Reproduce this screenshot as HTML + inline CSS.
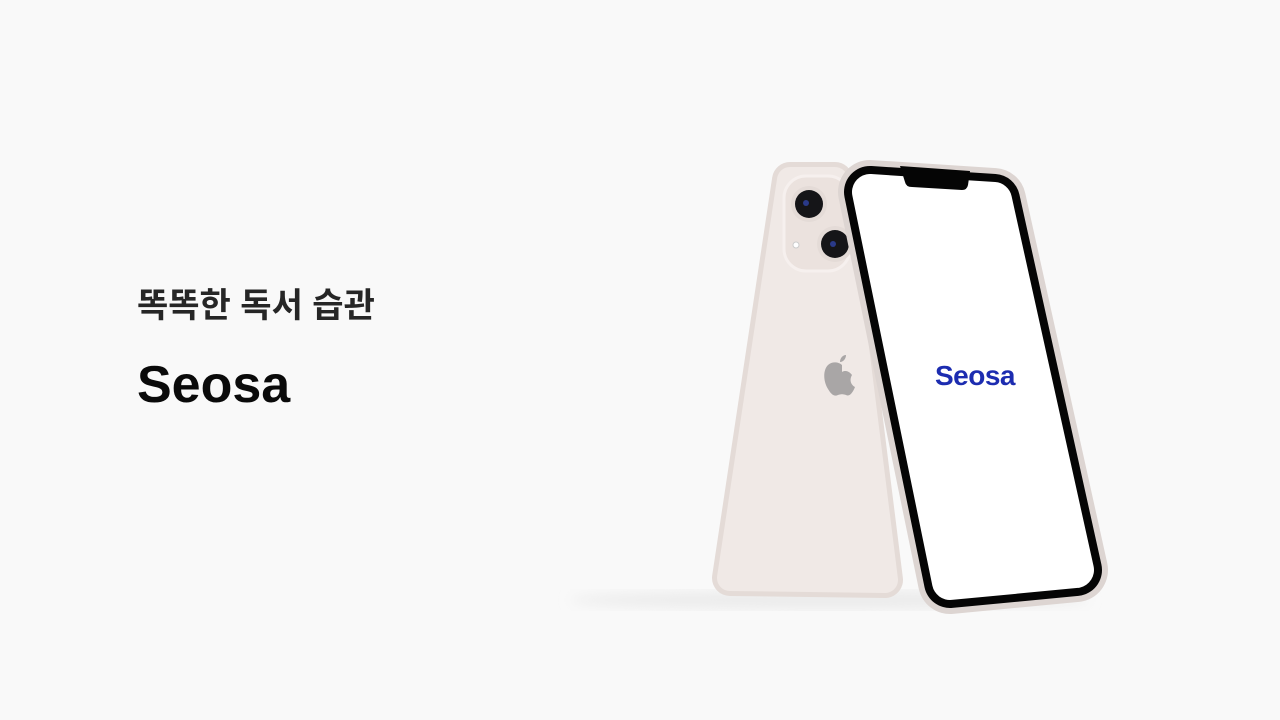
<!DOCTYPE html>
<html><head><meta charset="utf-8"><style>
html,body{margin:0;padding:0;width:1280px;height:720px;background:#f9f9f9;overflow:hidden}
.t1{position:absolute;left:137px;top:278px;font:700 34px "Liberation Sans","Noto Sans CJK KR",sans-serif;color:#262626;letter-spacing:0px}
.t2{position:absolute;left:137px;top:355px;font:700 52px "Liberation Sans",sans-serif;color:#0a0a0a;letter-spacing:0px}
svg{position:absolute;left:0;top:0}
</style></head><body>
<div class="t1">똑똑한 독서 습관</div>
<div class="t2">Seosa</div>
<svg width="1280" height="720">
<defs><filter id="b"><feGaussianBlur stdDeviation="6"/></filter></defs>
<ellipse cx="830" cy="600" rx="260" ry="9" fill="#ebebeb" filter="url(#b)"/>
<!-- back phone -->
<polygon points="790,180 835,180 885,580 730,578" fill="#eee6e3" stroke="#e4dbd7" stroke-width="36" stroke-linejoin="round"/>
<polygon points="790,180 835,180 885,580 730,578" fill="#f0e9e6" stroke="#f0e9e6" stroke-width="26" stroke-linejoin="round"/>
<rect x="784" y="176" width="66" height="95" rx="22" fill="#ebe2de" stroke="#f6f0ee" stroke-width="3"/>
<circle cx="809" cy="204" r="18" fill="#e4dbd7"/>
<circle cx="809" cy="204" r="14" fill="#151518"/>
<circle cx="806" cy="203" r="3" fill="#2a3a8a"/>
<circle cx="835" cy="244" r="18" fill="#e4dbd7"/>
<circle cx="835" cy="244" r="14" fill="#151518"/>
<circle cx="833" cy="244" r="3" fill="#2a3a8a"/>
<circle cx="796" cy="245" r="3" fill="#fff" stroke="#ccc"/>
<path d="M842 365c-3-3-10-4-14 0-5 5-5 16 0 24 3 5 6 8 10 6 3-1 5-1 8 0 4 2 7-3 9-8-4-2-6-7-3-12-3-4-7-5-10-3z M840 362c0-4 3-7 6-7 0 4-3 7-6 7z" fill="#a9a6a6"/>
<!-- front phone -->
<polygon points="870,192 994,200 1076,570 950,582" fill="#e8e2df" stroke="#ddd5d2" stroke-width="64" stroke-linejoin="round"/>
<polygon points="870,192 994,200 1076,570 950,582" fill="#050505" stroke="#050505" stroke-width="52" stroke-linejoin="round"/>
<polygon points="870,192 994,200 1076,570 950,582" fill="#ffffff" stroke="#ffffff" stroke-width="36" stroke-linejoin="round"/>
<path d="M900 166 L970 171 L968 185 Q967 190 962 190 L912 187 Q906 187 905 182 Z" fill="#050505"/>
<text x="975" y="385" text-anchor="middle" font-family="Liberation Sans,sans-serif" font-weight="700" font-size="28" fill="#1c2cb0" letter-spacing="-0.5">Seosa</text>
</svg>
</body></html>
